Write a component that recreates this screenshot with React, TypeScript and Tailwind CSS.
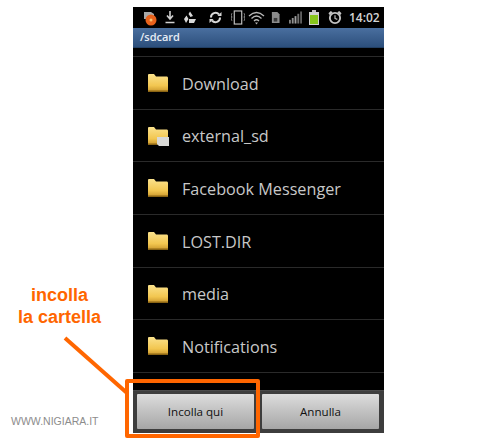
import React from 'react';

const folders = ['Download', 'external_sd', 'Facebook Messenger', 'LOST.DIR', 'media', 'Notifications'];

const FolderIcon = ({ sd }: { sd?: boolean }) => (
  <svg width="21" height="20" viewBox="0 0 21 20" className="shrink-0">
    <defs>
      <linearGradient id="folderFill" x1="0" y1="0" x2="0" y2="1">
        <stop offset="0" stopColor="#fbe28c" />
        <stop offset="0.65" stopColor="#f2c650" />
        <stop offset="1" stopColor="#c9952a" />
      </linearGradient>
    </defs>
    <path d="M0 2 Q0 1 1 1 H6 L8 3.5 H19 Q20 3.5 20 5 V18 Q20 19 19 19 H1 Q0 19 0 18 Z" fill="url(#folderFill)" />
    <path d="M0 17.5 H20 V18 Q20 19 19 19 H1 Q0 19 0 18 Z" fill="#8a6414" />
    {sd && <path d="M9 11 H21 V20 H11 L9 18 Z" fill="#d9d9d6" />}
  </svg>
);

const StatusIcons = () => (
  <div className="flex items-center h-[21px] bg-black pl-[9px] shrink-0">
    <svg width="16" height="16" viewBox="0 0 16 16" className="mr-[7px]">
      <path d="M2 2 H9 L12 4 V9 H2 Z" fill="#a8a8a8" />
      <circle cx="9" cy="10" r="5.5" fill="#e8621c" />
      <circle cx="9" cy="10" r="1.5" fill="#f8c070" />
    </svg>
    <svg width="10" height="13" viewBox="0 0 10 13" className="mr-[8px]">
      <path d="M5 0 V7 M2 4.5 L5 8 L8 4.5 M0.5 11.5 H9.5" stroke="#d0d0d0" strokeWidth="1.6" fill="none" />
    </svg>
    <svg width="14" height="13" viewBox="0 0 14 13" className="mr-[12px]">
      <path d="M7 0.5 L10 5 L7.5 6 L5.5 3 Z M1 8 L3.5 4.5 L5.5 8 L3 12 Z M6 12 V8 H13 L11 12 Z" fill="#d8d8d8" />
    </svg>
    <svg width="13" height="13" viewBox="0 0 13 13" className="mr-[9px]">
      <path d="M2 6.5 A4.5 4.5 0 0 1 10 3.5 M11 6.5 A4.5 4.5 0 0 1 3 9.5" stroke="#d8d8d8" strokeWidth="2" fill="none" />
      <path d="M8.5 5 H12.5 V1 Z M4.5 8 H0.5 V12 Z" fill="#d8d8d8" />
    </svg>
    <svg width="14" height="15" viewBox="0 0 15 15" className="mr-[3px]">
      <rect x="3.5" y="0.5" width="8" height="14" fill="none" stroke="#c8c8c8" strokeWidth="1.2" />
      <path d="M1 3 L0 5 L1 7 L0 9 L1 11 M14 3 L15 5 L14 7 L15 9 L14 11" stroke="#a0a0a0" fill="none" />
    </svg>
    <svg width="17" height="14" viewBox="0 0 17 14" className="mr-[6px]">
      <path d="M1 5 Q8.5 -2 16 5 M3.5 7.5 Q8.5 2.5 13.5 7.5 M6 10 Q8.5 7.5 11 10" stroke="#b8b8b8" strokeWidth="1.3" fill="none" />
      <path d="M7 11.5 H10 L8.5 13.5 Z" fill="#b8b8b8" />
    </svg>
    <svg width="9" height="13" viewBox="0 0 10 13" className="mr-[9px]">
      <path d="M1 0.5 H7 L9.5 3 V12.5 H1 Z" fill="#8c8c8c" />
      <rect x="3" y="7" width="4" height="4" fill="#3c3c3c" />
    </svg>
    <svg width="13" height="13" viewBox="0 0 14 13" className="mr-[7px]">
      <rect x="0" y="9" width="2" height="4" fill="#808080" />
      <rect x="3" y="7" width="2" height="6" fill="#909090" />
      <rect x="6" y="5" width="2" height="8" fill="#a0a0a0" />
      <rect x="9" y="2.5" width="2" height="10.5" fill="#707070" />
      <rect x="12" y="0" width="2" height="13" fill="#606060" />
    </svg>
    <svg width="10" height="15" viewBox="0 0 10 15" className="mr-[9px]">
      <rect x="3" y="0" width="4" height="2" fill="#c0c0c0" />
      <rect x="0" y="2" width="10" height="13" fill="#d0d0d0" />
      <rect x="1" y="5" width="8" height="9" fill="#86c51c" />
    </svg>
    <svg width="14" height="15" viewBox="0 0 15 15" className="mr-[7px]">
      <circle cx="7.5" cy="8" r="5.5" fill="none" stroke="#c4c4c4" strokeWidth="2" />
      <path d="M7.5 5 V8.5 L10 9.5" stroke="#c4c4c4" strokeWidth="1.2" fill="none" />
      <path d="M0.5 3 L3 0.5 L5 2 L2 5 Z M14.5 3 L12 0.5 L10 2 L13 5 Z" fill="#c4c4c4" />
    </svg>
    <span className="font-['Open_Sans',sans-serif] text-[12px] font-semibold text-[#d4d4d4] leading-none">14:02</span>
  </div>
);

export default function App() {
  return (
    <div className="relative w-[500px] h-[440px] bg-white overflow-hidden flex pt-[7px]">
      {/* left caption column */}
      <div className="w-[133px] h-[426px] flex flex-col items-start shrink-0">
        <p className="w-[119px] mt-[277px] text-center font-['Liberation_Sans',sans-serif] font-bold text-[18px] leading-[22px] text-[#ff6600]">
          incolla
          <br />
          la cartella
        </p>
        <p className="ml-[11px] mt-[86px] font-['Liberation_Sans',sans-serif] text-[10.5px] leading-[14px] text-[#8c8c8c]">
          WWW.NIGIARA.IT
        </p>
      </div>

      {/* phone */}
      <div className="w-[251px] h-[426px] flex flex-col bg-black shrink-0 font-['Open_Sans',sans-serif]">
        <StatusIcons />
        <div className="h-[20px] shrink-0 bg-gradient-to-b from-[#4a6f9f] to-[#2c4f7c] border-b border-[#223f63] pl-[7px] text-[11px] font-semibold leading-[18px] text-[#e6edf5]">
          /sdcard
        </div>
        <div className="flex-1 flex flex-col pt-[8px] overflow-hidden">
          {folders.map((name) => (
            <div key={name} className="h-[52.7px] shrink-0 flex items-center gap-[13px] border-t border-[#2a2a2a] pl-[15px]">
              <FolderIcon sd={name === 'external_sd'} />
              <span className="pt-[2px] text-[16.2px] leading-none text-[#c8c8c8]">{name}</span>
            </div>
          ))}
          <div className="flex-1 border-t border-[#2a2a2a]" />
        </div>
        <div className="h-[43px] shrink-0 flex gap-[8px] items-start bg-[#3d3d3d] border-t border-[#4a4a4a] pl-[4px] pr-[5px] pt-[3px]">
          <button className="flex-1 h-[35px] rounded-[1px] bg-gradient-to-b from-[#dddddd] to-[#a6a6a6] text-[11.6px] text-[#111111]">
            Incolla qui
          </button>
          <button className="flex-1 h-[35px] rounded-[1px] bg-gradient-to-b from-[#dddddd] to-[#a6a6a6] text-[11.6px] text-[#111111]">
            Annulla
          </button>
        </div>
      </div>

      {/* orange annotation over the screenshot */}
      <div className="absolute left-[125px] top-[379px] w-[135px] h-[59px] border-[4px] border-[#ff6600] rounded-[2px]" />
      <svg className="absolute left-[60px] top-[333px]" width="72" height="66" viewBox="0 0 72 66">
        <path d="M5 5 L67 60" stroke="#ff6600" strokeWidth="4" fill="none" />
      </svg>
    </div>
  );
}
